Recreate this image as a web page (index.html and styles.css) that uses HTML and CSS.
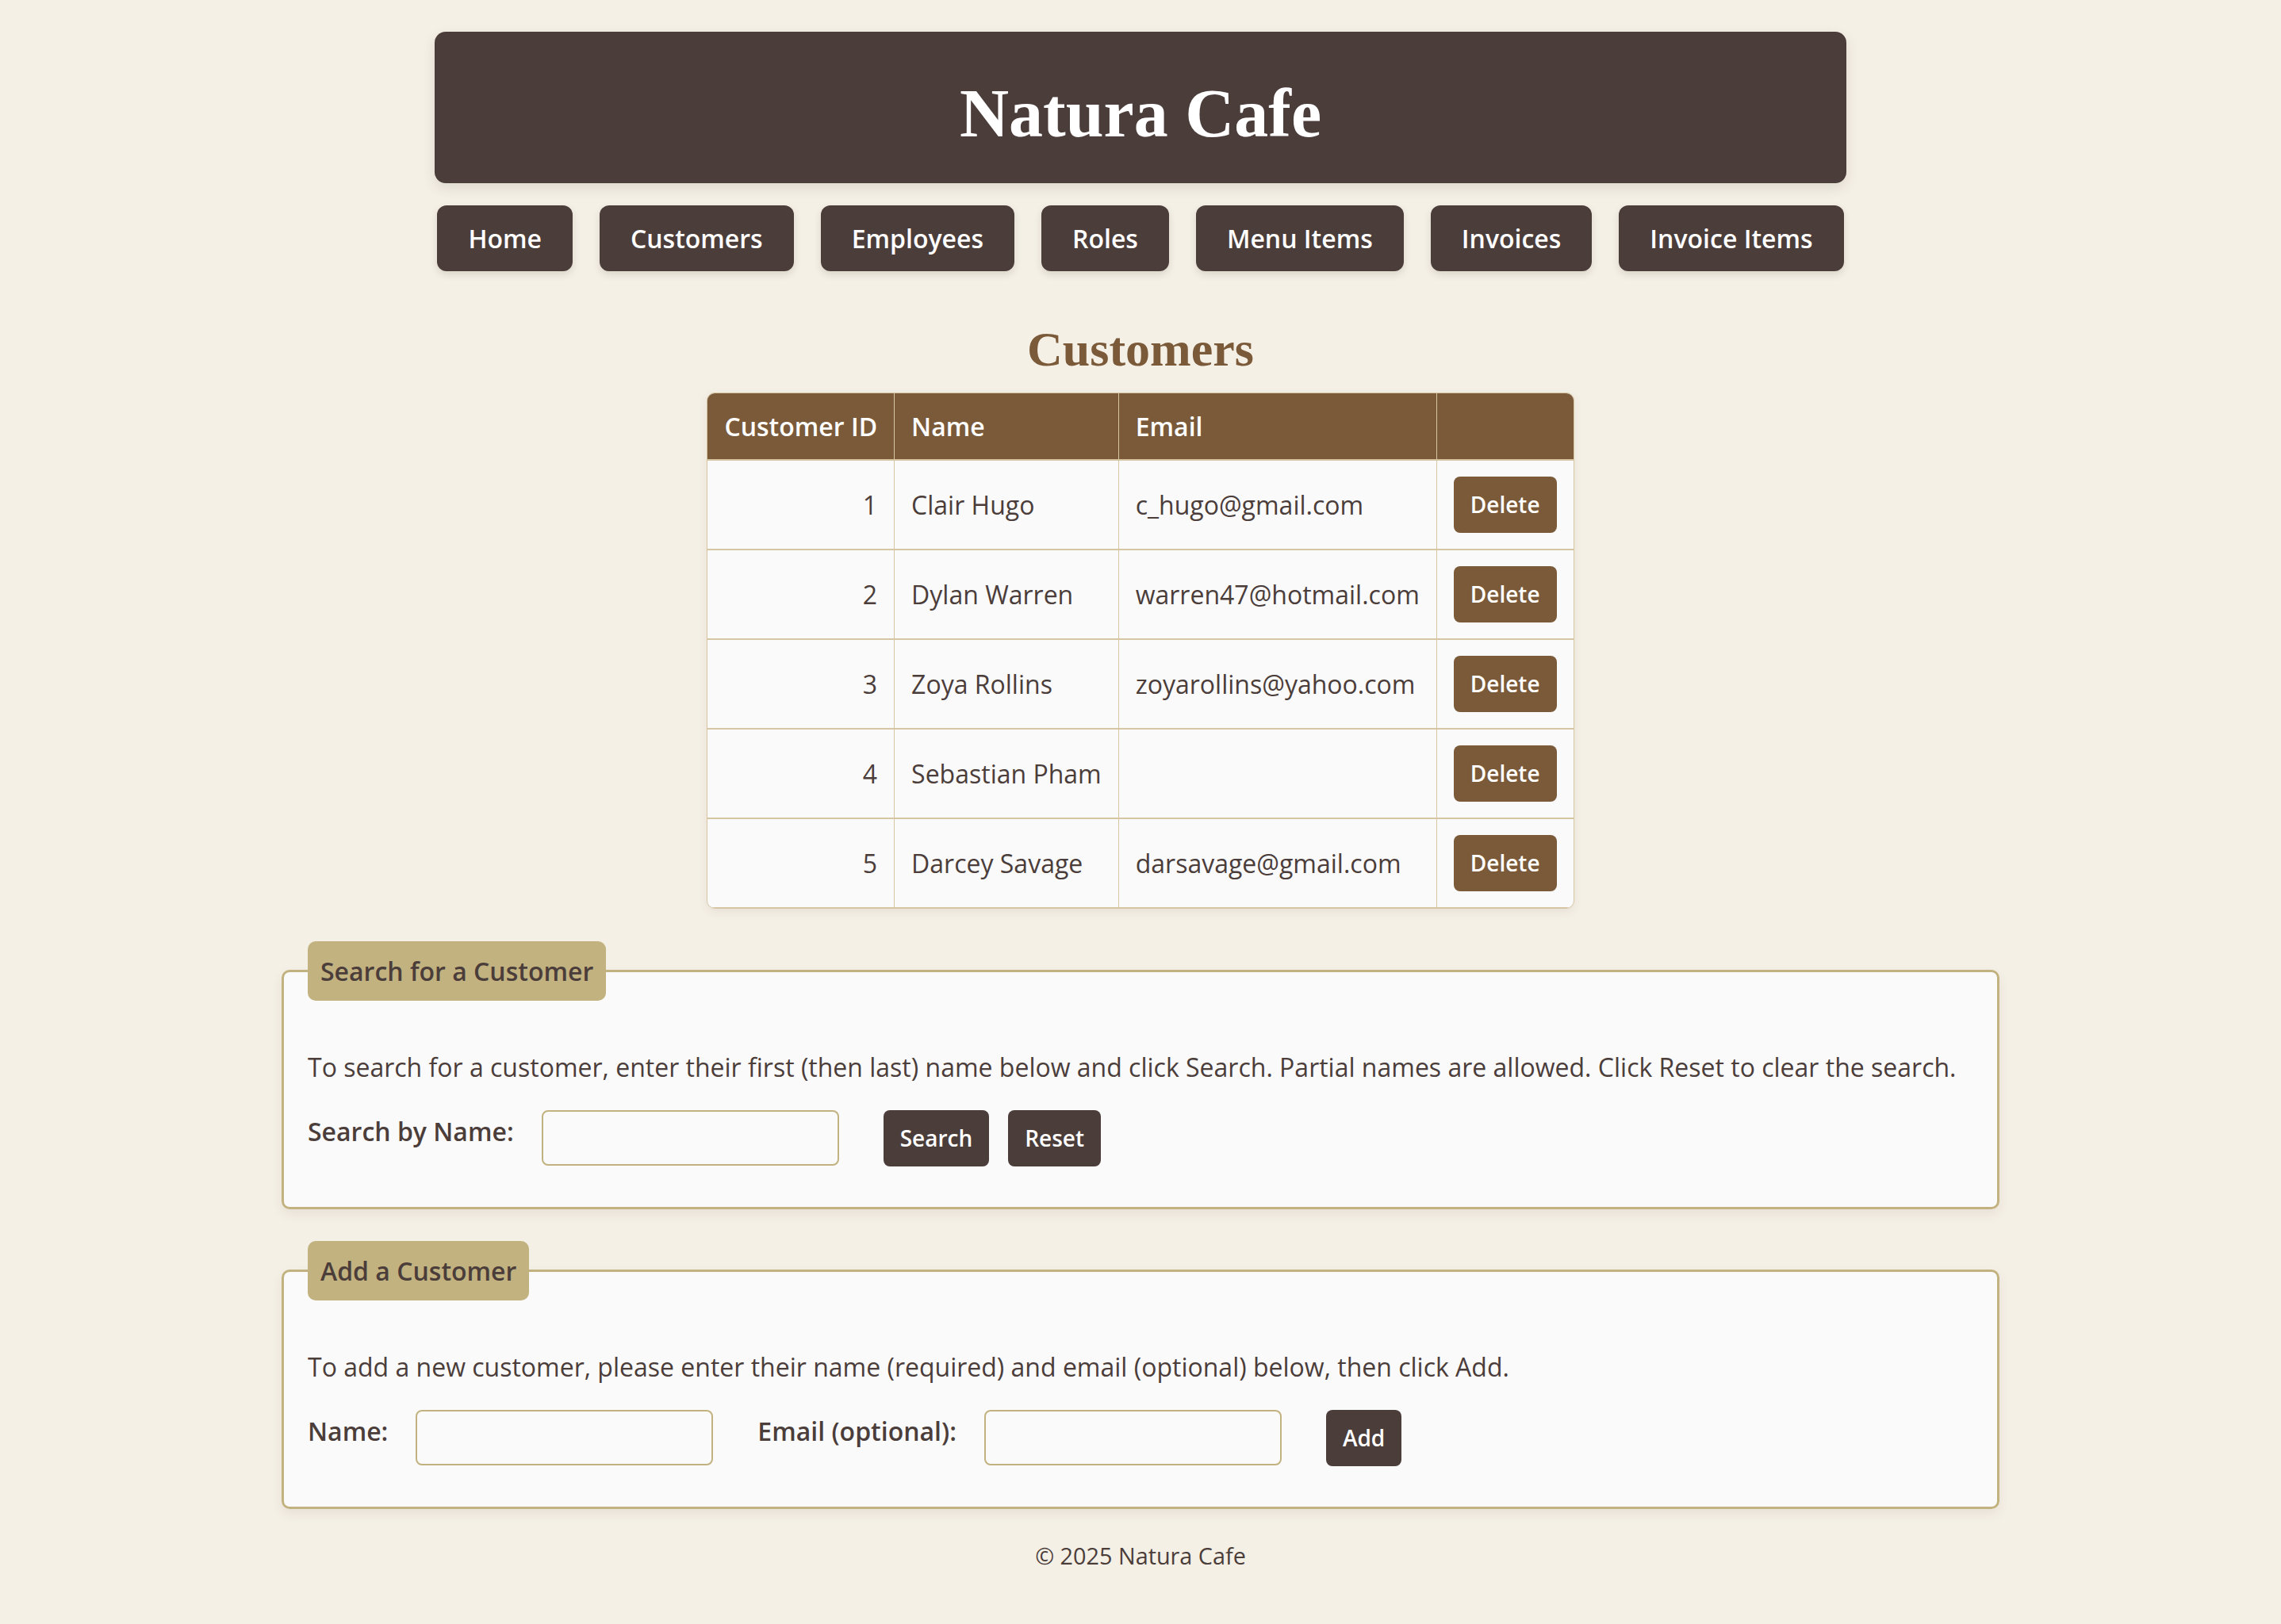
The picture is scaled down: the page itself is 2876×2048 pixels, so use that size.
FILE: index.html
```html
<!DOCTYPE html>
<html lang="en">
<head>
<meta charset="utf-8">
<title>Natura Cafe - Customers</title>
<link rel="stylesheet" href="styles.css">
</head>
<body>
<header class="site-header">
  <h1 class="site-title">Natura Cafe</h1>
</header>
<nav class="site-nav">
  <a class="nav-btn" href="#">Home</a>
  <a class="nav-btn" href="#">Customers</a>
  <a class="nav-btn" href="#">Employees</a>
  <a class="nav-btn" href="#">Roles</a>
  <a class="nav-btn" href="#">Menu Items</a>
  <a class="nav-btn" href="#">Invoices</a>
  <a class="nav-btn" href="#">Invoice Items</a>
</nav>
<main class="content">
  <h2 class="page-title">Customers</h2>
  <table class="data-table">
    <thead>
      <tr><th>Customer ID</th><th>Name</th><th>Email</th><th></th></tr>
    </thead>
    <tbody>
      <tr><td class="id-cell">1</td><td>Clair Hugo</td><td>c_hugo@gmail.com</td><td><button class="btn btn-brown">Delete</button></td></tr>
      <tr><td class="id-cell">2</td><td>Dylan Warren</td><td>warren47@hotmail.com</td><td><button class="btn btn-brown">Delete</button></td></tr>
      <tr><td class="id-cell">3</td><td>Zoya Rollins</td><td>zoyarollins@yahoo.com</td><td><button class="btn btn-brown">Delete</button></td></tr>
      <tr><td class="id-cell">4</td><td>Sebastian Pham</td><td></td><td><button class="btn btn-brown">Delete</button></td></tr>
      <tr><td class="id-cell">5</td><td>Darcey Savage</td><td>darsavage@gmail.com</td><td><button class="btn btn-brown">Delete</button></td></tr>
    </tbody>
  </table>

  <fieldset class="panel">
    <legend class="panel-legend">Search for a Customer</legend>
    <p class="panel-text">To search for a customer, enter their first (then last) name below and click Search. Partial names are allowed. Click Reset to clear the search.</p>
    <form class="form-row">
      <label class="form-label" for="search-name">Search by Name:</label>
      <input class="form-input" id="search-name" type="text">
      <button class="btn btn-dark" type="button">Search</button>
      <button class="btn btn-dark btn-next" type="button">Reset</button>
    </form>
  </fieldset>

  <fieldset class="panel">
    <legend class="panel-legend">Add a Customer</legend>
    <p class="panel-text">To add a new customer, please enter their name (required) and email (optional) below, then click Add.</p>
    <form class="form-row">
      <label class="form-label" for="add-name">Name:</label>
      <input class="form-input" id="add-name" type="text">
      <label class="form-label" for="add-email">Email (optional):</label>
      <input class="form-input" id="add-email" type="text">
      <button class="btn btn-dark" type="button">Add</button>
    </form>
  </fieldset>
</main>
<footer class="site-footer">© 2025 Natura Cafe</footer>
</body>
</html>
```
FILE: styles.css
```css
* {
  box-sizing: border-box;
}

body {
  margin: 0;
  padding: 40px 0 0;
  background: #f5f0e6;
  color: #4b3d3a;
  font-family: "Open Sans", "Liberation Sans", sans-serif;
  font-size: 32px;
}

.site-header {
  width: 1780px;
  margin: 0 auto;
  padding: 46px 0 30px;
  background: #4b3d3a;
  border-radius: 14px;
  text-align: center;
  box-shadow: 0 6px 16px rgba(60, 40, 20, 0.12);
}

.site-title {
  margin: 0;
  color: #ffffff;
  font-family: "Liberation Serif", "DejaVu Serif", serif;
  font-weight: 700;
  font-size: 86px;
  line-height: 115px;
}

.site-nav {
  display: flex;
  justify-content: center;
  gap: 34px;
  margin-top: 28px;
}

.nav-btn {
  display: block;
  padding: 19px 39px;
  background: #4b3d3a;
  color: #ffffff;
  text-decoration: none;
  font-weight: 600;
  font-size: 32px;
  line-height: 45px;
  border-radius: 12px;
  box-shadow: 0 4px 10px rgba(60, 40, 20, 0.14);
}

.page-title {
  margin: 58px 0 15px;
  text-align: center;
  color: #7b5a3a;
  font-family: "Liberation Serif", "DejaVu Serif", serif;
  font-weight: 700;
  font-size: 62px;
  line-height: 80px;
}

.data-table {
  margin: 0 auto;
  border-collapse: separate;
  border-spacing: 0;
  border: 1px solid #d6c6a4;
  border-radius: 10px;
  overflow: hidden;
  background: #fafafa;
  box-shadow: 0 4px 12px rgba(60, 40, 20, 0.08);
}

.data-table th {
  padding: 19px 21px;
  background: #7b5a3a;
  color: #ffffff;
  font-weight: 600;
  text-align: left;
  line-height: 45px;
  border-bottom: 2px solid #d6c6a4;
  border-right: 1px solid #d6c6a4;
}

.data-table td {
  padding: 20px 21px;
  line-height: 44px;
  vertical-align: middle;
  border-bottom: 2px solid #d6c6a4;
  border-right: 1px solid #d6c6a4;
}

.data-table th:last-child,
.data-table td:last-child {
  border-right: 0;
}

.data-table tbody tr:last-child td {
  border-bottom: 1px solid #d6c6a4;
}

.id-cell {
  text-align: right;
}

.btn {
  display: block;
  margin: 0;
  padding: 16px 21px;
  border: 0;
  border-radius: 8px;
  color: #ffffff;
  font-family: "Open Sans", "Liberation Sans", sans-serif;
  font-weight: 600;
  font-size: 28px;
  line-height: 39px;
  cursor: pointer;
}

.btn-brown {
  background: #7b5a3a;
}

.btn-dark {
  background: #4b3d3a;
}

.btn-next {
  margin-left: 24px;
}

.panel {
  width: 2166px;
  min-width: 0;
  margin: 41px auto 0;
  padding: 30px 30px 51px;
  border: 3px solid #c2b280;
  border-radius: 10px;
  background: #fafafa;
  box-shadow: 0 6px 14px rgba(60, 40, 20, 0.08);
}

.panel + .panel {
  margin-top: 40px;
}

.panel-legend {
  padding: 16px;
  background: #c2b280;
  color: #4b3d3a;
  font-weight: 600;
  font-size: 32px;
  line-height: 43px;
  border-radius: 10px;
}

.panel-text {
  margin: 32px 0;
  line-height: 44px;
}

.form-row {
  display: flex;
  align-items: flex-start;
  margin: 0;
}

.form-label {
  margin: 5px 35px 0 0;
  font-weight: 600;
  line-height: 44px;
}

.form-input {
  width: 375px;
  height: 70px;
  margin: 0 56px 0 0;
  padding: 0 12px;
  border: 2px solid #c2b280;
  border-radius: 8px;
  background: #fafafa;
  color: #4b3d3a;
  font: inherit;
}

.site-footer {
  margin-top: 39px;
  text-align: center;
  font-size: 28.8px;
  line-height: 40px;
}
```
